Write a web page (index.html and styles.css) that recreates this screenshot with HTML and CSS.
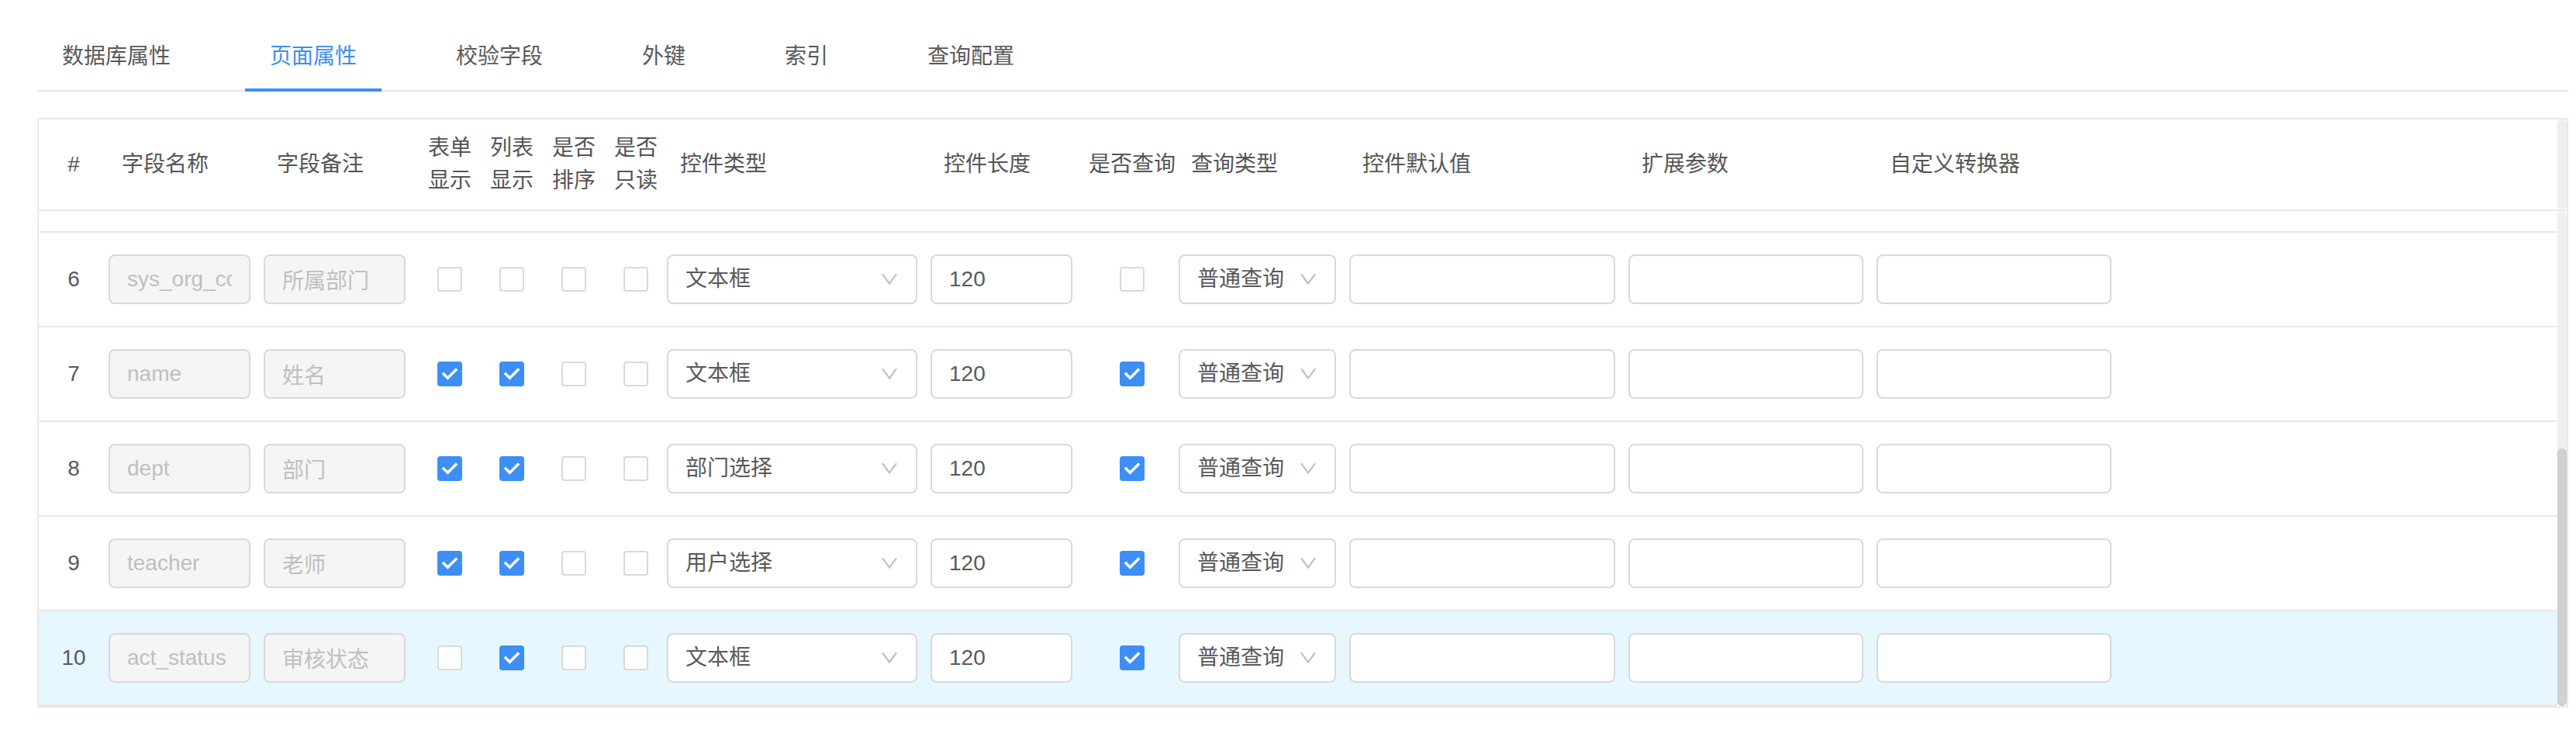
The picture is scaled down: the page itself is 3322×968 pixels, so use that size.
FILE: index.html
```html
<!DOCTYPE html>
<html lang="zh-CN">
<head>
<meta charset="utf-8">
<title>页面属性</title>
<link rel="stylesheet" href="styles.css">
</head>
<body>
<div class="page">
  <div class="tabs">
    <div class="tab">数据库属性</div>
    <div class="tab active">页面属性</div>
    <div class="tab">校验字段</div>
    <div class="tab">外键</div>
    <div class="tab">索引</div>
    <div class="tab">查询配置</div>
  </div>

  <div class="etable">
    <div class="thead">
      <div class="grid head-row">
        <div class="th th-idx">#</div>
        <div class="th">字段名称</div>
        <div class="th">字段备注</div>
        <div class="th th-cb">表单<br>显示</div>
        <div class="th th-cb">列表<br>显示</div>
        <div class="th th-cb">是否<br>排序</div>
        <div class="th th-cb">是否<br>只读</div>
        <div class="th">控件类型</div>
        <div class="th">控件长度</div>
        <div class="th th-cb">是否查询</div>
        <div class="th th-tight">查询类型</div>
        <div class="th">控件默认值</div>
        <div class="th">扩展参数</div>
        <div class="th">自定义转换器</div>
        <div class="th"></div>
      </div>
      <div class="sb-track"></div>
    </div>

    <div class="tbody">
      <div class="rows">
        <div class="tr-partial"></div>

        <div class="grid tr">
          <div class="td td-idx">6</div>
          <div class="td"><input class="inp" disabled value="sys_org_code"></div>
          <div class="td"><input class="inp" disabled value="所属部门"></div>
          <div class="td td-cb"><span class="cb"></span></div>
          <div class="td td-cb"><span class="cb"></span></div>
          <div class="td td-cb"><span class="cb"></span></div>
          <div class="td td-cb"><span class="cb"></span></div>
          <div class="td"><div class="sel"><span>文本框</span><svg class="arrow" viewBox="64 64 896 896"><path d="M884 256h-75c-5.1 0-9.9 2.5-12.9 6.6L512 654.2 227.9 262.6c-3-4.1-7.8-6.6-12.9-6.6h-75c-6.5 0-10.3 7.4-6.5 12.7l352.6 486.1c12.8 17.6 39 17.6 51.7 0l352.6-486.1c3.9-5.3.1-12.7-6.4-12.7z"/></svg></div></div>
          <div class="td"><input class="inp" value="120"></div>
          <div class="td td-cb"><span class="cb"></span></div>
          <div class="td"><div class="sel"><span>普通查询</span><svg class="arrow" viewBox="64 64 896 896"><path d="M884 256h-75c-5.1 0-9.9 2.5-12.9 6.6L512 654.2 227.9 262.6c-3-4.1-7.8-6.6-12.9-6.6h-75c-6.5 0-10.3 7.4-6.5 12.7l352.6 486.1c12.8 17.6 39 17.6 51.7 0l352.6-486.1c3.9-5.3.1-12.7-6.4-12.7z"/></svg></div></div>
          <div class="td"><input class="inp"></div>
          <div class="td"><input class="inp"></div>
          <div class="td"><input class="inp"></div>
          <div class="td"></div>
        </div>

        <div class="grid tr">
          <div class="td td-idx">7</div>
          <div class="td"><input class="inp" disabled value="name"></div>
          <div class="td"><input class="inp" disabled value="姓名"></div>
          <div class="td td-cb"><span class="cb on"><svg viewBox="0 0 32 32"><polyline points="7,16 13,22 25,10"/></svg></span></div>
          <div class="td td-cb"><span class="cb on"><svg viewBox="0 0 32 32"><polyline points="7,16 13,22 25,10"/></svg></span></div>
          <div class="td td-cb"><span class="cb"></span></div>
          <div class="td td-cb"><span class="cb"></span></div>
          <div class="td"><div class="sel"><span>文本框</span><svg class="arrow" viewBox="64 64 896 896"><path d="M884 256h-75c-5.1 0-9.9 2.5-12.9 6.6L512 654.2 227.9 262.6c-3-4.1-7.8-6.6-12.9-6.6h-75c-6.5 0-10.3 7.4-6.5 12.7l352.6 486.1c12.8 17.6 39 17.6 51.7 0l352.6-486.1c3.9-5.3.1-12.7-6.4-12.7z"/></svg></div></div>
          <div class="td"><input class="inp" value="120"></div>
          <div class="td td-cb"><span class="cb on"><svg viewBox="0 0 32 32"><polyline points="7,16 13,22 25,10"/></svg></span></div>
          <div class="td"><div class="sel"><span>普通查询</span><svg class="arrow" viewBox="64 64 896 896"><path d="M884 256h-75c-5.1 0-9.9 2.5-12.9 6.6L512 654.2 227.9 262.6c-3-4.1-7.8-6.6-12.9-6.6h-75c-6.5 0-10.3 7.4-6.5 12.7l352.6 486.1c12.8 17.6 39 17.6 51.7 0l352.6-486.1c3.9-5.3.1-12.7-6.4-12.7z"/></svg></div></div>
          <div class="td"><input class="inp"></div>
          <div class="td"><input class="inp"></div>
          <div class="td"><input class="inp"></div>
          <div class="td"></div>
        </div>

        <div class="grid tr">
          <div class="td td-idx">8</div>
          <div class="td"><input class="inp" disabled value="dept"></div>
          <div class="td"><input class="inp" disabled value="部门"></div>
          <div class="td td-cb"><span class="cb on"><svg viewBox="0 0 32 32"><polyline points="7,16 13,22 25,10"/></svg></span></div>
          <div class="td td-cb"><span class="cb on"><svg viewBox="0 0 32 32"><polyline points="7,16 13,22 25,10"/></svg></span></div>
          <div class="td td-cb"><span class="cb"></span></div>
          <div class="td td-cb"><span class="cb"></span></div>
          <div class="td"><div class="sel"><span>部门选择</span><svg class="arrow" viewBox="64 64 896 896"><path d="M884 256h-75c-5.1 0-9.9 2.5-12.9 6.6L512 654.2 227.9 262.6c-3-4.1-7.8-6.6-12.9-6.6h-75c-6.5 0-10.3 7.4-6.5 12.7l352.6 486.1c12.8 17.6 39 17.6 51.7 0l352.6-486.1c3.9-5.3.1-12.7-6.4-12.7z"/></svg></div></div>
          <div class="td"><input class="inp" value="120"></div>
          <div class="td td-cb"><span class="cb on"><svg viewBox="0 0 32 32"><polyline points="7,16 13,22 25,10"/></svg></span></div>
          <div class="td"><div class="sel"><span>普通查询</span><svg class="arrow" viewBox="64 64 896 896"><path d="M884 256h-75c-5.1 0-9.9 2.5-12.9 6.6L512 654.2 227.9 262.6c-3-4.1-7.8-6.6-12.9-6.6h-75c-6.5 0-10.3 7.4-6.5 12.7l352.6 486.1c12.8 17.6 39 17.6 51.7 0l352.6-486.1c3.9-5.3.1-12.7-6.4-12.7z"/></svg></div></div>
          <div class="td"><input class="inp"></div>
          <div class="td"><input class="inp"></div>
          <div class="td"><input class="inp"></div>
          <div class="td"></div>
        </div>

        <div class="grid tr">
          <div class="td td-idx">9</div>
          <div class="td"><input class="inp" disabled value="teacher"></div>
          <div class="td"><input class="inp" disabled value="老师"></div>
          <div class="td td-cb"><span class="cb on"><svg viewBox="0 0 32 32"><polyline points="7,16 13,22 25,10"/></svg></span></div>
          <div class="td td-cb"><span class="cb on"><svg viewBox="0 0 32 32"><polyline points="7,16 13,22 25,10"/></svg></span></div>
          <div class="td td-cb"><span class="cb"></span></div>
          <div class="td td-cb"><span class="cb"></span></div>
          <div class="td"><div class="sel"><span>用户选择</span><svg class="arrow" viewBox="64 64 896 896"><path d="M884 256h-75c-5.1 0-9.9 2.5-12.9 6.6L512 654.2 227.9 262.6c-3-4.1-7.8-6.6-12.9-6.6h-75c-6.5 0-10.3 7.4-6.5 12.7l352.6 486.1c12.8 17.6 39 17.6 51.7 0l352.6-486.1c3.9-5.3.1-12.7-6.4-12.7z"/></svg></div></div>
          <div class="td"><input class="inp" value="120"></div>
          <div class="td td-cb"><span class="cb on"><svg viewBox="0 0 32 32"><polyline points="7,16 13,22 25,10"/></svg></span></div>
          <div class="td"><div class="sel"><span>普通查询</span><svg class="arrow" viewBox="64 64 896 896"><path d="M884 256h-75c-5.1 0-9.9 2.5-12.9 6.6L512 654.2 227.9 262.6c-3-4.1-7.8-6.6-12.9-6.6h-75c-6.5 0-10.3 7.4-6.5 12.7l352.6 486.1c12.8 17.6 39 17.6 51.7 0l352.6-486.1c3.9-5.3.1-12.7-6.4-12.7z"/></svg></div></div>
          <div class="td"><input class="inp"></div>
          <div class="td"><input class="inp"></div>
          <div class="td"><input class="inp"></div>
          <div class="td"></div>
        </div>

        <div class="grid tr tr-hover">
          <div class="td td-idx">10</div>
          <div class="td"><input class="inp" disabled value="act_status"></div>
          <div class="td"><input class="inp" disabled value="审核状态"></div>
          <div class="td td-cb"><span class="cb"></span></div>
          <div class="td td-cb"><span class="cb on"><svg viewBox="0 0 32 32"><polyline points="7,16 13,22 25,10"/></svg></span></div>
          <div class="td td-cb"><span class="cb"></span></div>
          <div class="td td-cb"><span class="cb"></span></div>
          <div class="td"><div class="sel"><span>文本框</span><svg class="arrow" viewBox="64 64 896 896"><path d="M884 256h-75c-5.1 0-9.9 2.5-12.9 6.6L512 654.2 227.9 262.6c-3-4.1-7.8-6.6-12.9-6.6h-75c-6.5 0-10.3 7.4-6.5 12.7l352.6 486.1c12.8 17.6 39 17.6 51.7 0l352.6-486.1c3.9-5.3.1-12.7-6.4-12.7z"/></svg></div></div>
          <div class="td"><input class="inp" value="120"></div>
          <div class="td td-cb"><span class="cb on"><svg viewBox="0 0 32 32"><polyline points="7,16 13,22 25,10"/></svg></span></div>
          <div class="td"><div class="sel"><span>普通查询</span><svg class="arrow" viewBox="64 64 896 896"><path d="M884 256h-75c-5.1 0-9.9 2.5-12.9 6.6L512 654.2 227.9 262.6c-3-4.1-7.8-6.6-12.9-6.6h-75c-6.5 0-10.3 7.4-6.5 12.7l352.6 486.1c12.8 17.6 39 17.6 51.7 0l352.6-486.1c3.9-5.3.1-12.7-6.4-12.7z"/></svg></div></div>
          <div class="td"><input class="inp"></div>
          <div class="td"><input class="inp"></div>
          <div class="td"><input class="inp"></div>
          <div class="td"></div>
        </div>
      </div>
      <div class="sb-track"><div class="sb-thumb"></div></div>
    </div>
  </div>
</div>
</body>
</html>
```

FILE: styles.css
```css
* { box-sizing: border-box; }

html, body {
  margin: 0;
  padding: 0;
  background: #ffffff;
}

body {
  font-family: "Liberation Sans", "Noto Sans CJK SC", sans-serif;
  font-size: 28px;
  line-height: 42px;
  color: #595959;
}

.page {
  width: 3312px;
  padding: 28px 0 0 48px;
}

/* ---------- tabs ---------- */
.tabs {
  display: flex;
  border-bottom: 2px solid #e8e8e8;
  margin-bottom: 34px;
}

.tab {
  padding: 24px 32px 20px;
  margin-right: 64px;
  margin-bottom: -2px;
  border-bottom: 4px solid transparent;
  color: #595959;
  white-space: nowrap;
}

.tab.active {
  color: #3d8ef6;
  border-bottom-color: #3d8ef6;
}

/* ---------- editable table ---------- */
.etable {
  border: 2px solid #e8e8e8;
}

.grid {
  display: grid;
  grid-template-columns: 81px 200px 200px 80px 80px 80px 80px 340px 200px 120px 220px 360px 320px 320px 1fr;
}

.thead {
  display: flex;
  border-bottom: 2px solid #e8e8e8;
}

.head-row {
  flex: 1;
  height: 116px;
  align-items: center;
}

.th {
  padding-left: 26px;
  white-space: nowrap;
  color: #555555;
}

.th-idx {
  padding-left: 9px;
  display: flex;
  justify-content: center;
}

.th-cb {
  padding-left: 18px;
  display: flex;
  justify-content: center;
  text-align: center;
}

.th-tight {
  padding-left: 25px;
}

.tbody {
  display: flex;
  height: 638px;
}

.rows {
  flex: 1;
  min-width: 0;
}

.tr-partial {
  height: 28px;
  border-bottom: 2px solid #e8e8e8;
}

.tr {
  height: 122px;
  border-bottom: 2px solid #e8e8e8;
  align-items: center;
  background: #ffffff;
}

.tr-hover {
  background: #e6f7ff;
}

.td {
  padding: 0 8px 0 9px;
  min-width: 0;
}

.td-idx {
  display: flex;
  justify-content: center;
  padding-right: 0;
}

.td-cb {
  display: flex;
  justify-content: center;
  padding: 0 0 0 18px;
}

/* scrollbars (drawn) */
.sb-track {
  flex: none;
  width: 12px;
  display: flex;
  flex-direction: column;
  background: #efefef;
  border-radius: 6px;
}

.sb-thumb {
  margin-top: auto;
  height: 332px;
  background: #d1d1d1;
  border: 1px solid #c9c9c9;
  border-radius: 6px;
}

/* ---------- controls ---------- */
.inp {
  display: block;
  width: 100%;
  height: 64px;
  margin: 0;
  padding: 0 22px;
  border: 2px solid #d9d9d9;
  border-radius: 8px;
  background: #ffffff;
  font-family: "Liberation Sans", "Noto Sans CJK SC", sans-serif;
  font-size: 28px;
  line-height: 42px;
  color: #595959;
  outline: none;
}

.inp:disabled {
  background: #f5f5f5;
  color: #bfbfbf;
  -webkit-text-fill-color: #bfbfbf;
  opacity: 1;
}

.sel {
  display: flex;
  align-items: center;
  justify-content: space-between;
  width: 100%;
  height: 64px;
  padding: 0 22px;
  border: 2px solid #d9d9d9;
  border-radius: 8px;
  background: #ffffff;
  color: #595959;
  white-space: nowrap;
  overflow: hidden;
}

.sel span {
  overflow: hidden;
  text-overflow: ellipsis;
}

.arrow {
  flex: none;
  width: 24px;
  height: 24px;
  fill: #bfbfbf;
}

.cb {
  display: block;
  width: 32px;
  height: 32px;
  border: 2px solid #d9d9d9;
  border-radius: 4px;
  background: #ffffff;
}

.cb.on {
  background: #3d8ef6;
  border-color: #3d8ef6;
}

.cb svg {
  display: block;
  width: 28px;
  height: 28px;
}

.cb polyline {
  fill: none;
  stroke: #ffffff;
  stroke-width: 4;
  stroke-linecap: square;
  stroke-linejoin: miter;
}
```
